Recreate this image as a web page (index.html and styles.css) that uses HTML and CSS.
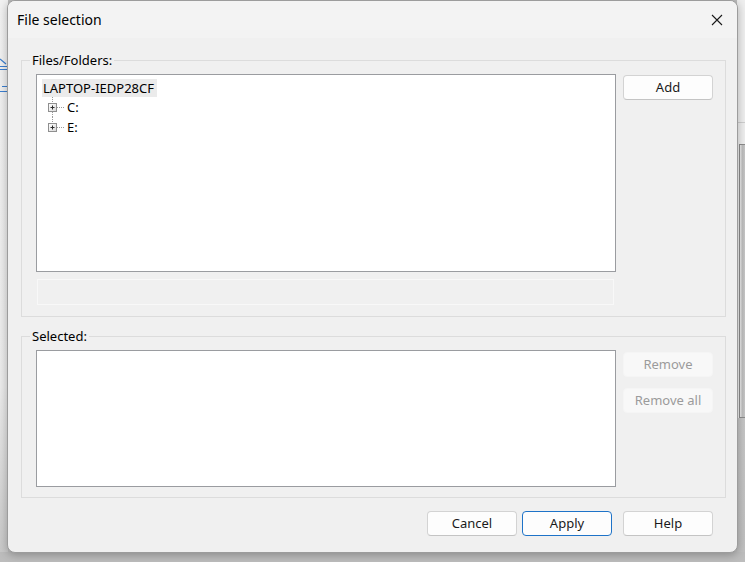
FILE: index.html
```html
<!DOCTYPE html>
<html>
<head>
<meta charset="utf-8">
<link rel="stylesheet" href="styles.css">
</head>
<body>
<div class="backdrop">
  <div class="bd-left">
    <svg class="bd-icon1" width="7" height="14" viewBox="0 0 7 14"><path d="M0 2 L6 7 M0 9.5 H7 M0 12.5 H7" stroke="#3b7fd1" stroke-width="1.2" fill="none"/></svg>
    <svg class="bd-icon2" width="7" height="10" viewBox="0 0 7 10"><path d="M2 1.5 H7 M0 6.5 H7" stroke="#3b7fd1" stroke-width="1.2" fill="none"/></svg>
  </div>
  <div class="bd-right">
    <div class="bd-line"></div>
    <div class="bd-bar"></div>
  </div>
</div>

<div class="dialog">
  <div class="titlebar">
    <span class="title">File selection</span>
    <svg class="close" width="12" height="12" viewBox="0 0 12 12"><path d="M1 1 L11 11 M11 1 L1 11" stroke="#1a1a1a" stroke-width="1.1" fill="none"/></svg>
  </div>
  <div class="body">
    <div class="group group-files">
      <span class="legend">Files/Folders:</span>
      <div class="group-inner">
        <div class="col-main">
          <div class="listbox tree">
            <div class="tree-root"><span class="root-label">LAPTOP-IEDP28CF</span></div>
            <div class="tree-row">
              <svg class="node" width="22" height="20" viewBox="0 0 22 20">
                <defs><linearGradient id="pg" x1="0" y1="0" x2="1" y2="1"><stop offset="0" stop-color="#ffffff"/><stop offset="1" stop-color="#d8d8d8"/></linearGradient></defs>
                <path d="M9.5 0 V6 M9.5 15 V20 M14 10.5 H21" stroke="#9a9a9a" stroke-width="1" stroke-dasharray="1 1" fill="none"/>
                <rect x="5.5" y="6.5" width="8" height="8" fill="url(#pg)" stroke="#8f8f8f"/>
                <path d="M7.5 10.5 H11.5 M9.5 8.5 V12.5" stroke="#2b2b2b" stroke-width="1" fill="none"/>
              </svg>
              <span class="node-label">C:</span>
            </div>
            <div class="tree-row">
              <svg class="node" width="22" height="20" viewBox="0 0 22 20">
                <path d="M9.5 0 V6 M14 10.5 H21" stroke="#9a9a9a" stroke-width="1" stroke-dasharray="1 1" fill="none"/>
                <rect x="5.5" y="6.5" width="8" height="8" fill="url(#pg)" stroke="#8f8f8f"/>
                <path d="M7.5 10.5 H11.5 M9.5 8.5 V12.5" stroke="#2b2b2b" stroke-width="1" fill="none"/>
              </svg>
              <span class="node-label">E:</span>
            </div>
          </div>
          <div class="editbox"></div>
        </div>
        <div class="col-buttons">
          <button class="btn">Add</button>
        </div>
      </div>
    </div>

    <div class="group group-selected">
      <span class="legend">Selected:</span>
      <div class="group-inner">
        <div class="col-main">
          <div class="listbox selected-list"></div>
        </div>
        <div class="col-buttons col-remove">
          <button class="btn disabled">Remove</button>
          <button class="btn disabled">Remove all</button>
        </div>
      </div>
    </div>

    <div class="footer">
      <button class="btn">Cancel</button>
      <button class="btn focused">Apply</button>
      <button class="btn help">Help</button>
    </div>
  </div>
</div>
</body>
</html>
```

FILE: styles.css
```css
html, body {
  margin: 0;
  padding: 0;
}
body {
  width: 745px;
  height: 562px;
  overflow: hidden;
  background: #bdbdbd;
  font-family: "Noto Sans", "Open Sans", sans-serif;
  font-size: 13px;
  color: #000;
  position: relative;
}

/* backdrop behind the dialog */
.backdrop {
  position: absolute;
  left: 0;
  top: 0;
  width: 745px;
  height: 552px;
}
.bd-left {
  position: absolute;
  left: 0;
  top: 0;
  width: 8px;
  height: 552px;
  background: linear-gradient(to bottom, #f2f2f2 0%, #ececec 70%, #c9c9c9 100%);
}
.bd-icon1 {
  position: absolute;
  left: 0;
  top: 57px;
}
.bd-icon2 {
  position: absolute;
  left: 0;
  top: 85px;
}
.bd-right {
  position: absolute;
  left: 737px;
  top: 0;
  width: 8px;
  height: 552px;
  background: linear-gradient(to bottom, #efefef 0, #efefef 418px, #c6c6c6 418px, #c0c0c0 100%);
}
.bd-line {
  position: absolute;
  left: 0;
  top: 122px;
  width: 8px;
  height: 1px;
  background: #cfcfcf;
}
.bd-bar {
  position: absolute;
  left: 2px;
  top: 144px;
  width: 6px;
  height: 272px;
  border-left: 1px solid #8c8c8c;
  border-top: 1px solid #8c8c8c;
  border-bottom: 1px solid #8c8c8c;
  background: linear-gradient(to right, #e6e6e6 0, #e6e6e6 1px, #bdbdbd 2px, #c9c9c9 100%);
}

/* dialog */
.dialog {
  position: relative;
  margin-left: 7px;
  width: 731px;
  height: 553px;
  box-sizing: border-box;
  border: 1px solid #9c9c9c;
  border-radius: 8px;
  background: #f0f0f0;
  box-shadow: 0 2px 10px rgba(0, 0, 0, 0.28);
  display: flex;
  flex-direction: column;
  overflow: hidden;
}
.titlebar {
  height: 37px;
  flex: none;
  background: #f3f3f3;
  display: flex;
  align-items: center;
  justify-content: space-between;
  padding: 0 14px 0 9px;
}
.title {
  font-size: 14px;
  margin-top: -1px;
}
.close {
  display: block;
}
.body {
  flex: 1;
  padding: 22px 11px 16px 13px;
  display: flex;
  flex-direction: column;
}

.group {
  border: 1px solid #dcdcdc;
  display: flex;
  flex-direction: column;
}
.legend {
  align-self: flex-start;
  display: block;
  margin: -9px 0 0 8px;
  padding: 0 2px;
  height: 17px;
  line-height: 17px;
  background: #f0f0f0;
}
.group-inner {
  display: flex;
  gap: 7px;
  padding: 5px 12px 11px 14px;
}
.col-main {
  display: flex;
  flex-direction: column;
  gap: 7px;
}
.col-buttons {
  display: flex;
  flex-direction: column;
  padding-top: 1px;
}
.col-remove {
  gap: 11px;
  padding-top: 2px;
}

.listbox {
  width: 580px;
  box-sizing: border-box;
  background: #fff;
  border: 1px solid #9a9ca0;
}
.tree {
  height: 198px;
  padding: 4px 0 0 5px;
}
.selected-list {
  height: 137px;
}
.group-selected {
  margin-top: 19px;
}
.group-selected .group-inner {
  padding-bottom: 10px;
  padding-top: 5px;
}

.editbox {
  margin-left: 1px;
  width: 577px;
  height: 26px;
  box-sizing: border-box;
  border: 1px solid #f8f8f8;
  background: #f0f0f0;
}

.tree-root {
  height: 18px;
  display: flex;
}
.root-label {
  background: #ebebeb;
  padding: 0 3px 0 1px;
  line-height: 18px;
}
.tree-row {
  height: 20px;
  display: flex;
  align-items: center;
  padding-left: 1px;
}
.node {
  display: block;
  flex: none;
}
.node-label {
  margin-left: 2px;
  line-height: 20px;
}

.btn {
  width: 90px;
  height: 25px;
  box-sizing: border-box;
  border: 1px solid #d3d3d3;
  border-bottom-color: #c4c4c4;
  border-radius: 4px;
  background: #fdfdfd;
  font-family: "Noto Sans", "Open Sans", sans-serif;
  font-size: 13px;
  color: #1a1a1a;
  padding: 0;
  line-height: 21px;
}
.btn.disabled {
  border-color: #f5f5f5;
  background: #f8f8f8;
  color: #9b9b9b;
}
.btn.focused {
  border-color: #1e73c8;
}
.footer {
  margin-top: 13px;
  display: flex;
  justify-content: flex-end;
  gap: 5px;
  padding-right: 13px;
}
.footer .help {
  margin-left: 6px;
}
```
